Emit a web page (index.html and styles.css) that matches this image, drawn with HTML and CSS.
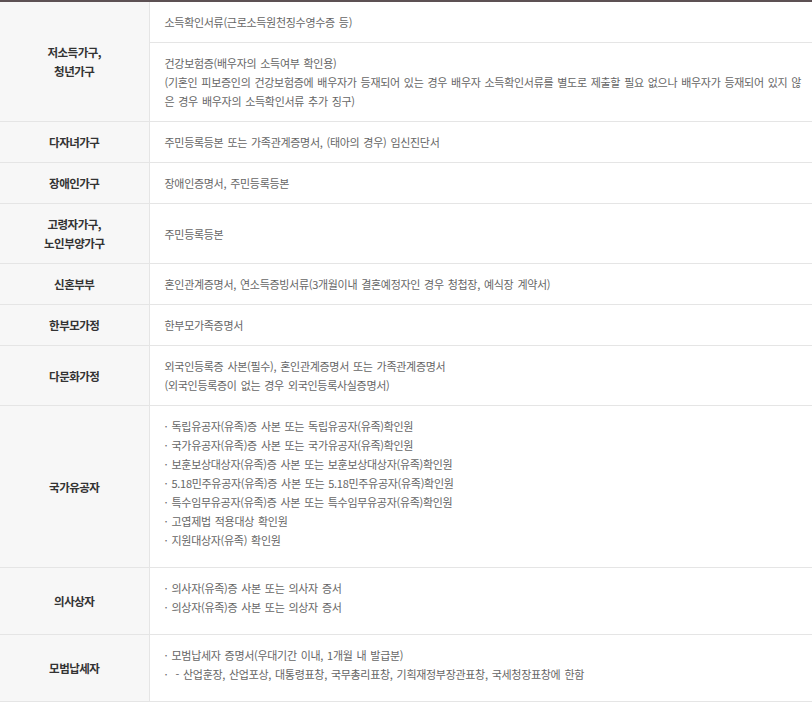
FILE: index.html
```html
<!DOCTYPE html>
<html lang="ko">
<head>
  <meta charset="UTF-8" />
  <meta name="viewport" content="width=device-width, initial-scale=1" />
  <title>제출서류 안내</title>
  <link rel="stylesheet" href="styles.css">
</head>
<body>
  <table class="doc-table">
    <colgroup>
      <col class="col-head" />
      <col />
    </colgroup>
    <tbody>
      <tr>
        <th rowspan="2">저소득가구,<br>청년가구</th>
        <td>소득확인서류(근로소득원천징수영수증 등)</td>
      </tr>
      <tr>
        <td>건강보험증(배우자의 소득여부 확인용)<br>(기혼인 피보증인의 건강보험증에 배우자가 등재되어 있는 경우 배우자 소득확인서류를 별도로 제출할 필요 없으나 배우자가 등재되어 있지 않은 경우 배우자의 소득확인서류 추가 징구)</td>
      </tr>
      <tr>
        <th>다자녀가구</th>
        <td>주민등록등본 또는 가족관계증명서, (태아의 경우) 임신진단서</td>
      </tr>
      <tr>
        <th>장애인가구</th>
        <td>장애인증명서, 주민등록등본</td>
      </tr>
      <tr>
        <th>고령자가구,<br>노인부양가구</th>
        <td>주민등록등본</td>
      </tr>
      <tr>
        <th>신혼부부</th>
        <td>혼인관계증명서, 연소득증빙서류(3개월이내 결혼예정자인 경우 청첩장, 예식장 계약서)</td>
      </tr>
      <tr>
        <th>한부모가정</th>
        <td>한부모가족증명서</td>
      </tr>
      <tr>
        <th>다문화가정</th>
        <td>외국인등록증 사본(필수), 혼인관계증명서 또는 가족관계증명서<br>(외국인등록증이 없는 경우 외국인등록사실증명서)</td>
      </tr>
      <tr>
        <th>국가유공자</th>
        <td>
          <ul class="dot-list">
            <li>독립유공자(유족)증 사본 또는 독립유공자(유족)확인원</li>
            <li>국가유공자(유족)증 사본 또는 국가유공자(유족)확인원</li>
            <li>보훈보상대상자(유족)증 사본 또는 보훈보상대상자(유족)확인원</li>
            <li>5.18민주유공자(유족)증 사본 또는 5.18민주유공자(유족)확인원</li>
            <li>특수임무유공자(유족)증 사본 또는 특수임무유공자(유족)확인원</li>
            <li>고엽제법 적용대상 확인원</li>
            <li>지원대상자(유족) 확인원</li>
          </ul>
        </td>
      </tr>
      <tr>
        <th>의사상자</th>
        <td>
          <ul class="dot-list">
            <li>의사자(유족)증 사본 또는 의사자 증서</li>
            <li>의상자(유족)증 사본 또는 의상자 증서</li>
          </ul>
        </td>
      </tr>
      <tr>
        <th>모범납세자</th>
        <td>
          <ul class="dot-list">
            <li>모범납세자 증명서(우대기간 이내, 1개월 내 발급분)</li>
            <li>&nbsp;- 산업훈장, 산업포상, 대통령표창, 국무총리표창, 기획재정부장관표창, 국세청장표창에 한함</li>
          </ul>
        </td>
      </tr>
    </tbody>
  </table>
</body>
</html>
```

FILE: styles.css
```css
body {
  margin: 0;
  background-color: #fff;
  font-family: "Noto Sans CJK KR", "Noto Sans", sans-serif;
  font-size: 11px;
  letter-spacing: -0.3px;
  color: #666;
}

.doc-table {
  width: 100%;
  border-collapse: collapse;
  border-top: 2px solid #5d5154;
  line-height: 19px;
}

.col-head {
  width: 149px;
}

.doc-table th {
  background-color: #f7f7f7;
  color: #333;
  font-size: 11.5px;
  letter-spacing: -0.5px;
  font-weight: bold;
  text-align: center;
  vertical-align: middle;
  padding: 11px 5px 10px;
  border-bottom: 1px solid #e5e5e5;
  border-right: 1px solid #e5e5e5;
}

.doc-table td {
  text-align: left;
  vertical-align: middle;
  word-spacing: 1.2px;
  padding: 11px 7px 10px 15px;
  border-bottom: 1px solid #e5e5e5;
}

/* 점 목록 */
.dot-list {
  list-style: none;
  margin: 0 0 7px;
  padding: 0;
}
.dot-list li::before {
  content: "·";
  display: inline-block;
  width: 7px;
  letter-spacing: 0;
}
```
